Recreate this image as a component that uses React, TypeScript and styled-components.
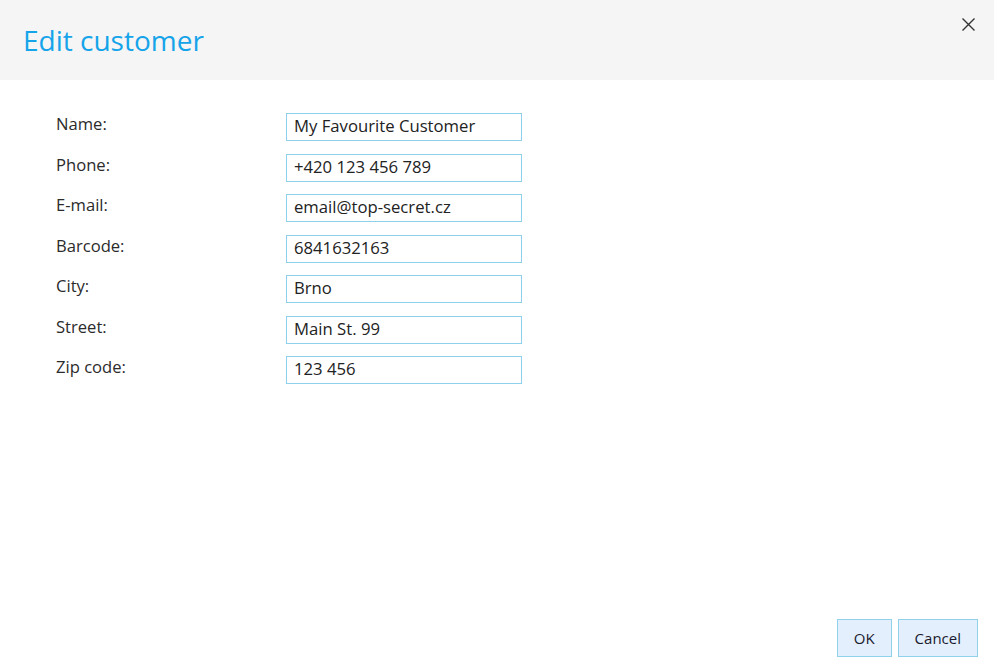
import styled, { createGlobalStyle } from "styled-components";

const GlobalStyle = createGlobalStyle`
  html, body {
    margin: 0;
    padding: 0;
    background: #ffffff;
    font-family: "Open Sans", "Noto Sans", sans-serif;
  }
`;

const fields = [
  { label: "Name:", value: "My Favourite Customer" },
  { label: "Phone:", value: "+420 123 456 789" },
  { label: "E-mail:", value: "email@top-secret.cz" },
  { label: "Barcode:", value: "6841632163" },
  { label: "City:", value: "Brno" },
  { label: "Street:", value: "Main St. 99" },
  { label: "Zip code:", value: "123 456" },
];

const App = () => {
  return (
    <>
      <GlobalStyle />
      <Dialog>
        <Header>
          <Title>Edit customer</Title>
          <CloseButton aria-label="Close">
            <svg width="13" height="13" viewBox="0 0 13 13">
              <path d="M0.5 0.5 L12.5 12.5 M12.5 0.5 L0.5 12.5" stroke="#333" strokeWidth="1.4" />
            </svg>
          </CloseButton>
        </Header>
        <Form>
          {fields.map((f) => (
            <Row key={f.label}>
              <Label>{f.label}</Label>
              <Input defaultValue={f.value} />
            </Row>
          ))}
        </Form>
        <Footer>
          <Button>OK</Button>
          <Button>Cancel</Button>
        </Footer>
      </Dialog>
    </>
  );
};

export default App;

const Dialog = styled.div`
  width: 994px;
  height: 670px;
  display: flex;
  flex-direction: column;
  background: #ffffff;
`;
const Header = styled.div`
  height: 80px;
  background: #f5f5f5;
  display: flex;
  align-items: flex-start;
  justify-content: space-between;
  padding: 0 19px 0 23px;
  box-sizing: border-box;
`;
const Title = styled.h1`
  margin: 21px 0 0;
  font-size: 28px;
  font-weight: 400;
  color: #15a4ea;
  line-height: 38px;
`;
const CloseButton = styled.button`
  margin-top: 18px;
  padding: 0;
  border: none;
  background: none;
  width: 13px;
  height: 13px;
  display: flex;
  cursor: pointer;
`;
const Form = styled.div`
  flex: 1;
  display: flex;
  flex-direction: column;
  gap: 12.5px;
  padding: 33px 0 0 56px;
`;
const Row = styled.div`
  display: grid;
  grid-template-columns: 230px 236px;
  align-items: start;
`;
const Label = styled.div`
  font-size: 16.6px;
  color: #2b2b2b;
  line-height: 22px;
`;
const Input = styled.input`
  box-sizing: border-box;
  width: 236px;
  height: 28px;
  border: 1px solid #8fd0ec;
  padding: 0 7px 3px;
  font-family: "Open Sans", "Noto Sans", sans-serif;
  font-size: 16.7px;
  color: #222222;
  outline: none;
`;
const Footer = styled.div`
  display: flex;
  justify-content: flex-end;
  gap: 6px;
  padding: 0 16px 13px 0;
`;
const Button = styled.button`
  height: 38px;
  padding: 0 16px;
  background: #e3effd;
  border: 1px solid #90d2ea;
  font-family: "Open Sans", "Noto Sans", sans-serif;
  font-size: 15px;
  color: #1a1a2e;
  cursor: pointer;
`;
